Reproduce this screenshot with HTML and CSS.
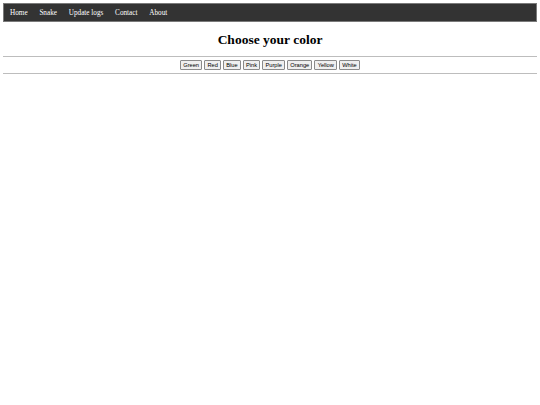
FILE: index.html
```html
<!DOCTYPE html>
<html>
<head>
<meta charset="utf-8">
<link rel="stylesheet" href="styles.css">
</head>
<body>
<nav class="topnav">
  <a href="#">Home</a>
  <a href="#">Snake</a>
  <a href="#">Update logs</a>
  <a href="#">Contact</a>
  <a href="#">About</a>
</nav>
<h1 class="title">Choose your color</h1>
<hr class="rule">
<div class="colors">
  <button class="btn">Green</button>
  <button class="btn">Red</button>
  <button class="btn">Blue</button>
  <button class="btn">Pink</button>
  <button class="btn">Purple</button>
  <button class="btn">Orange</button>
  <button class="btn">Yellow</button>
  <button class="btn">White</button>
</div>
<hr class="rule">
</body>
</html>
```
FILE: styles.css
```css
html, body { background: #fff; }
body {
  margin: 3px;
  font-family: "Liberation Serif", "Times New Roman", serif;
}
.topnav {
  display: flex;
  align-items: center;
  height: 17px;
  background: #333;
  border: 1px solid #7a7a7a;
  padding-left: 6px;
}
.topnav a {
  color: #fff;
  text-decoration: none;
  font-size: 7.2px;
  margin-right: 11.8px;
}
.title {
  margin: 9px 0 0;
  text-align: center;
  font-size: 13.5px;
  line-height: 18px;
  font-weight: bold;
  color: #000;
}
.rule {
  margin: 7px 0 0;
  border: 0;
  border-top: 1px solid #bdbdbd;
  height: 0;
}
.colors {
  display: flex;
  justify-content: center;
  gap: 2px;
  margin-top: 3px;
}
.btn {
  font-family: "Liberation Sans", Arial, sans-serif;
  font-size: 5.7px;
  height: 10px;
  padding: 0 2.2px;
  background: #efefef;
  border: 1px solid #8a8a8a;
  border-radius: 1px;
  color: #000;
  line-height: 8px;
}
.colors + .rule { margin-top: 3px; }
```
